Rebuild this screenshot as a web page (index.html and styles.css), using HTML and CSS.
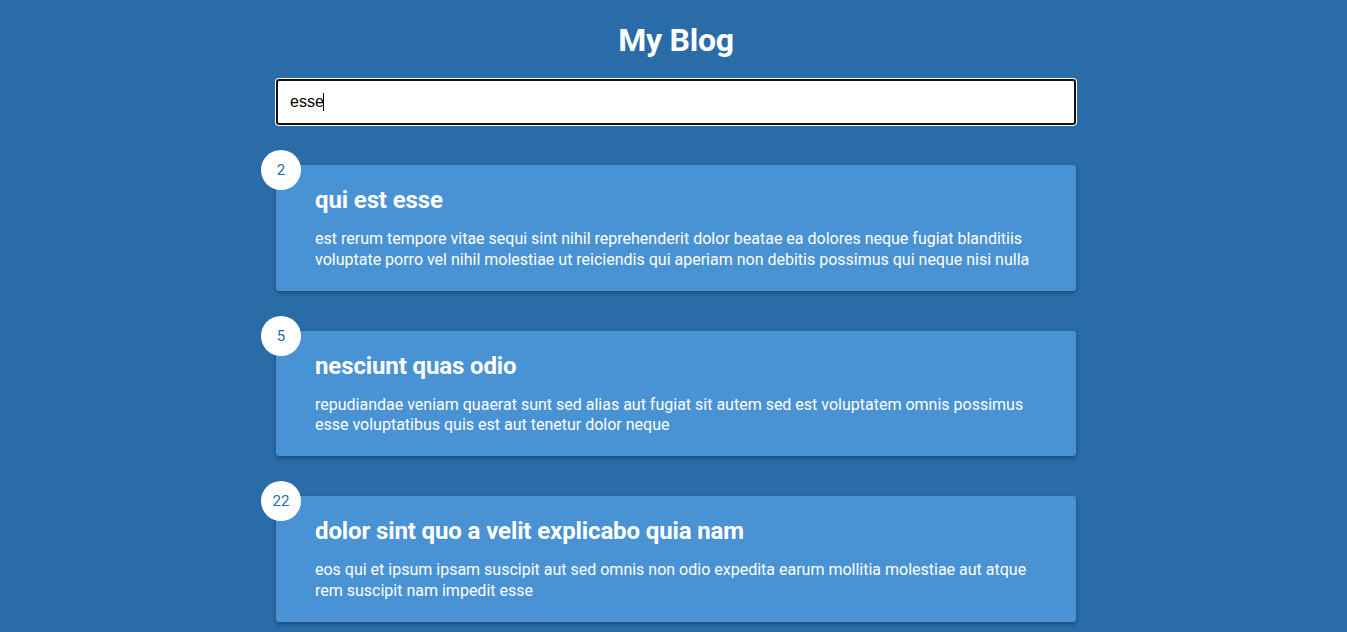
FILE: index.html
```html
<!DOCTYPE html>
<html lang="en">
<head>
<meta charset="UTF-8">
<title>My Blog</title>
<link rel="stylesheet" href="styles.css">
</head>
<body>
  <h1 class="page-title">My Blog</h1>
  <div class="filter-container">
    <input type="text" class="filter" value="esse" autofocus>
    <span class="caret"></span>
  </div>
  <div class="posts-container">
    <div class="post">
      <div class="number">2</div>
      <div class="post-info">
        <h2 class="post-title">qui est esse</h2>
        <p class="post-body">est rerum tempore vitae sequi sint nihil reprehenderit dolor beatae ea dolores neque fugiat blanditiis voluptate porro vel nihil molestiae ut reiciendis qui aperiam non debitis possimus qui neque nisi nulla</p>
      </div>
    </div>
    <div class="post">
      <div class="number">5</div>
      <div class="post-info">
        <h2 class="post-title">nesciunt quas odio</h2>
        <p class="post-body">repudiandae veniam quaerat sunt sed alias aut fugiat sit autem sed est voluptatem omnis possimus esse voluptatibus quis est aut tenetur dolor neque</p>
      </div>
    </div>
    <div class="post">
      <div class="number">22</div>
      <div class="post-info">
        <h2 class="post-title">dolor sint quo a velit explicabo quia nam</h2>
        <p class="post-body">eos qui et ipsum ipsam suscipit aut sed omnis non odio expedita earum mollitia molestiae aut atque rem suscipit nam impedit esse</p>
      </div>
    </div>
  </div>
</body>
</html>
```

FILE: styles.css
```css
* {
  box-sizing: border-box;
}

body {
  background-color: #296ca8;
  color: #fff;
  font-family: Roboto, "Noto Sans", sans-serif;
  display: flex;
  flex-direction: column;
  align-items: center;
  min-height: 100vh;
  margin: 0;
  padding: 0 0 100px 5px;
}

.page-title {
  font-size: 32px;
  margin: 21px 0 0;
  text-align: center;
  letter-spacing: -0.25px;
}

.filter-container {
  position: relative;
  margin-top: 20px;
  width: 800px;
}

.filter {
  display: block;
  width: 100%;
  padding: 12px;
  font-size: 16px;
  font-family: "Liberation Sans", Arial, sans-serif;
  color: #000;
  background: #fff;
  border: 2px solid #111;
  border-radius: 3px;
  box-shadow: 0 0 0 1px #fff;
  outline: none;
  caret-color: transparent;
}

.caret {
  position: absolute;
  left: 47px;
  top: 14px;
  width: 1px;
  height: 18px;
  background: #000;
}

.posts-container {
  width: 800px;
}

.post {
  position: relative;
  background-color: #4992d3;
  box-shadow: 0 2px 4px rgba(0, 0, 0, 0.3);
  border-radius: 3px;
  padding: 22px 20px 20px;
  margin: 40px 0;
  display: flex;
}

.post-info {
  margin-left: 19px;
}

.post-title {
  margin: 0;
  font-size: 24px;
  line-height: 27px;
  letter-spacing: -0.12px;
}

.post-body {
  margin: 15px 0 0;
  line-height: 1.3;
  font-size: 16px;
}

.number {
  position: absolute;
  top: -15px;
  left: -15px;
  font-size: 15px;
  width: 40px;
  height: 40px;
  border-radius: 50%;
  background: #fff;
  color: #296ca8;
  display: flex;
  align-items: center;
  justify-content: center;
}
```
